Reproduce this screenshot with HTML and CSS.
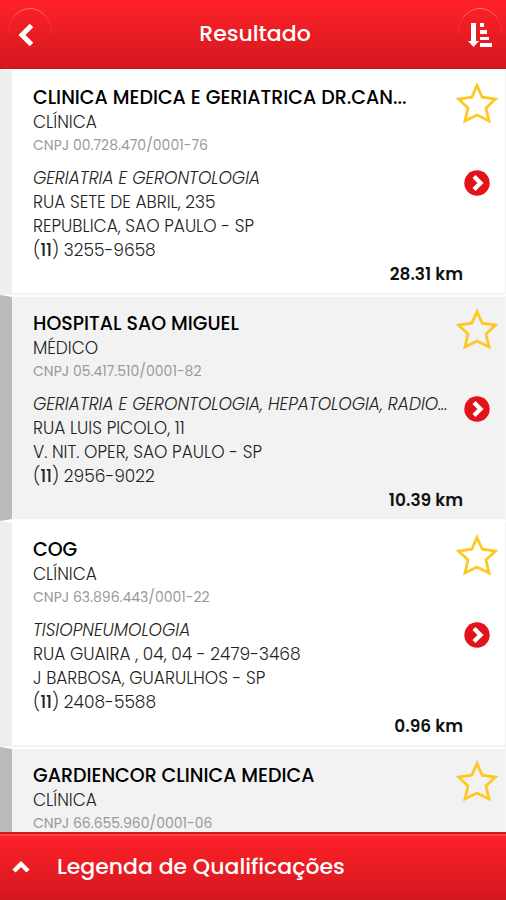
FILE: index.html
```html
<!DOCTYPE html>
<html lang="pt-BR">
<head>
    <meta charset="UTF-8">
    <meta name="viewport" content="width=device-width, initial-scale=1.0">
    <title>Resultado</title>
    <link rel="stylesheet" href="styles.css">
</head>
<body>
    <!-- Shared icons -->
    <svg width="0" height="0" class="sprite" aria-hidden="true">
        <symbol id="star" viewBox="0 0 42 42">
            <path d="M21 3.5 L26.2 15.2 L39.5 17 L30 26 L33 39 L21 33 L9 39 L12 26 L2.5 17 L15.8 15.2 Z" fill="none" stroke="#fdc821" stroke-width="2.8"/>
        </symbol>
        <symbol id="go" viewBox="0 0 26 26">
            <circle cx="13" cy="13" r="12.7" fill="#e3131b"/>
            <path d="M10 6.5 L16.5 13 L10 19.5" fill="none" stroke="#fff" stroke-width="4.4"/>
        </symbol>
    </svg>

    <header class="topbar">
        <button type="button" class="round-btn back" aria-label="Voltar">
            <svg width="16" height="24" viewBox="0 0 16 24"><path d="M13.5 2.5 L4 12 L13.5 21.5" fill="none" stroke="#fff" stroke-width="5"/></svg>
        </button>
        <h1>Resultado</h1>
        <button type="button" class="round-btn" aria-label="Ordenar">
            <svg width="24" height="26" viewBox="0 0 24 26" fill="#fff">
                <path d="M3 1h5v18h3l-5.500 6-5.500-6h3z"/>
                <path d="M12 1h4v4h-4zM12 8h7v4h-7zM12 15h9v3h-9zM12 21h12v4H12z"/>
            </svg>
        </button>
    </header>

    <main class="results">
        <article class="card">
            <div class="info">
                <h2>CLINICA MEDICA E GERIATRICA DR.CAN...</h2>
                <p>CLÍNICA</p>
                <p class="cnpj">CNPJ 00.728.470/0001-76</p>
                <p class="specialty">GERIATRIA E GERONTOLOGIA</p>
                <p>RUA SETE DE ABRIL, 235</p>
                <p>REPUBLICA, SAO PAULO - SP</p>
                <p>(<b>11</b>) 3255-9658</p>
            </div>
            <div class="actions">
                <button type="button" aria-label="Favoritar"><svg width="42" height="42"><use href="#star"/></svg></button>
                <button type="button" aria-label="Ver detalhes"><svg width="26" height="26"><use href="#go"/></svg></button>
            </div>
            <p class="distance">28.31 km</p>
        </article>

        <article class="card alt">
            <div class="info">
                <h2>HOSPITAL SAO MIGUEL</h2>
                <p>MÉDICO</p>
                <p class="cnpj">CNPJ 05.417.510/0001-82</p>
                <p class="specialty">GERIATRIA E GERONTOLOGIA, HEPATOLOGIA, RADIO...</p>
                <p>RUA LUIS PICOLO, 11</p>
                <p>V. NIT. OPER, SAO PAULO - SP</p>
                <p>(<b>11</b>) 2956-9022</p>
            </div>
            <div class="actions">
                <button type="button" aria-label="Favoritar"><svg width="42" height="42"><use href="#star"/></svg></button>
                <button type="button" aria-label="Ver detalhes"><svg width="26" height="26"><use href="#go"/></svg></button>
            </div>
            <p class="distance">10.39 km</p>
        </article>

        <article class="card">
            <div class="info">
                <h2>COG</h2>
                <p>CLÍNICA</p>
                <p class="cnpj">CNPJ 63.896.443/0001-22</p>
                <p class="specialty">TISIOPNEUMOLOGIA</p>
                <p>RUA GUAIRA , 04, 04 - 2479-3468</p>
                <p>J BARBOSA, GUARULHOS - SP</p>
                <p>(<b>11</b>) 2408-5588</p>
            </div>
            <div class="actions">
                <button type="button" aria-label="Favoritar"><svg width="42" height="42"><use href="#star"/></svg></button>
                <button type="button" aria-label="Ver detalhes"><svg width="26" height="26"><use href="#go"/></svg></button>
            </div>
            <p class="distance">0.96 km</p>
        </article>

        <article class="card alt">
            <div class="info">
                <h2>GARDIENCOR CLINICA MEDICA</h2>
                <p>CLÍNICA</p>
                <p class="cnpj">CNPJ 66.655.960/0001-06</p>
            </div>
            <div class="actions">
                <button type="button" aria-label="Favoritar"><svg width="42" height="42"><use href="#star"/></svg></button>
            </div>
        </article>
    </main>

    <button type="button" class="legend">
        <svg width="18" height="14" viewBox="0 0 18 14"><path d="M2 11 L9 4 L16 11" fill="none" stroke="#fff" stroke-width="4.4"/></svg>
        <span>Legenda de Qualificações</span>
    </button>
</body>
</html>
```

FILE: styles.css
```css
* {
    margin: 0;
    padding: 0;
    box-sizing: border-box;
}

body {
    height: 100vh;
    display: flex;
    flex-direction: column;
    background-color: #ffffff;
    color: #222222;
    font-family: Poppins, Inter, sans-serif;
    font-size: 17px;
    font-weight: 300;
    line-height: 24px;
}

button {
    border: none;
    background: none;
    font: inherit;
    color: inherit;
    cursor: pointer;
}

svg {
    display: block;
}

.sprite {
    position: absolute;
}

/* Top bar */
.topbar {
    flex: none;
    display: flex;
    justify-content: space-between;
    align-items: center;
    height: 69px;
    padding: 0 4px 0 8px;
    background: linear-gradient(#ff2129, #d3181e);
    border-bottom: 1px solid #c8161c;
    color: #ffffff;
}

.topbar h1 {
    font-size: 22px;
    font-weight: 500;
}

.round-btn {
    display: flex;
    justify-content: center;
    align-items: center;
    width: 44px;
    height: 52px;
    border-top: 1px solid rgba(255, 255, 255, 0.35);
    border-radius: 50%;
}

.round-btn.back {
    padding-right: 8px;
}

/* Result list */
.results {
    flex: 1;
    min-height: 0;
    overflow: hidden;
}

.card {
    display: grid;
    grid-template-columns: 1fr 42px;
    padding: 15px 7px 7px 21px;
    border: solid #f4f4f4;
    border-width: 2px 1px 2px 12px;
    border-top-color: #ffffff;
    border-left-color: #eeeeee;
}

.card.alt {
    background-color: #f2f2f2;
    border-left-color: #bababa;
    border-bottom-color: #ffffff;
}

.info {
    min-width: 0;
    white-space: nowrap;
}

.card h2 {
    color: #000000;
    font-size: 19px;
    font-weight: 500;
    line-height: 24px;
}

.info b {
    font-weight: 500;
}

.info .cnpj {
    color: #999999;
    font-size: 14px;
    font-weight: 400;
    line-height: 22px;
}

.info .specialty {
    margin-top: 10px;
    font-style: italic;
}

.actions {
    display: flex;
    flex-direction: column;
    align-items: center;
    gap: 46px;
    margin-top: -4px;
}

.distance {
    grid-column: 1 / -1;
    padding-right: 35px;
    color: #111111;
    font-weight: 600;
    text-align: right;
}

/* Bottom bar */
.legend {
    flex: none;
    display: flex;
    align-items: center;
    gap: 27px;
    height: 68px;
    padding: 0 12px;
    background: linear-gradient(#ff2129, #d3181e);
    border-top: 2px solid #d3181e;
    box-shadow: inset 0 2px 0 #ff4248;
    color: #ffffff;
    font-size: 22px;
    font-weight: 500;
}
```
